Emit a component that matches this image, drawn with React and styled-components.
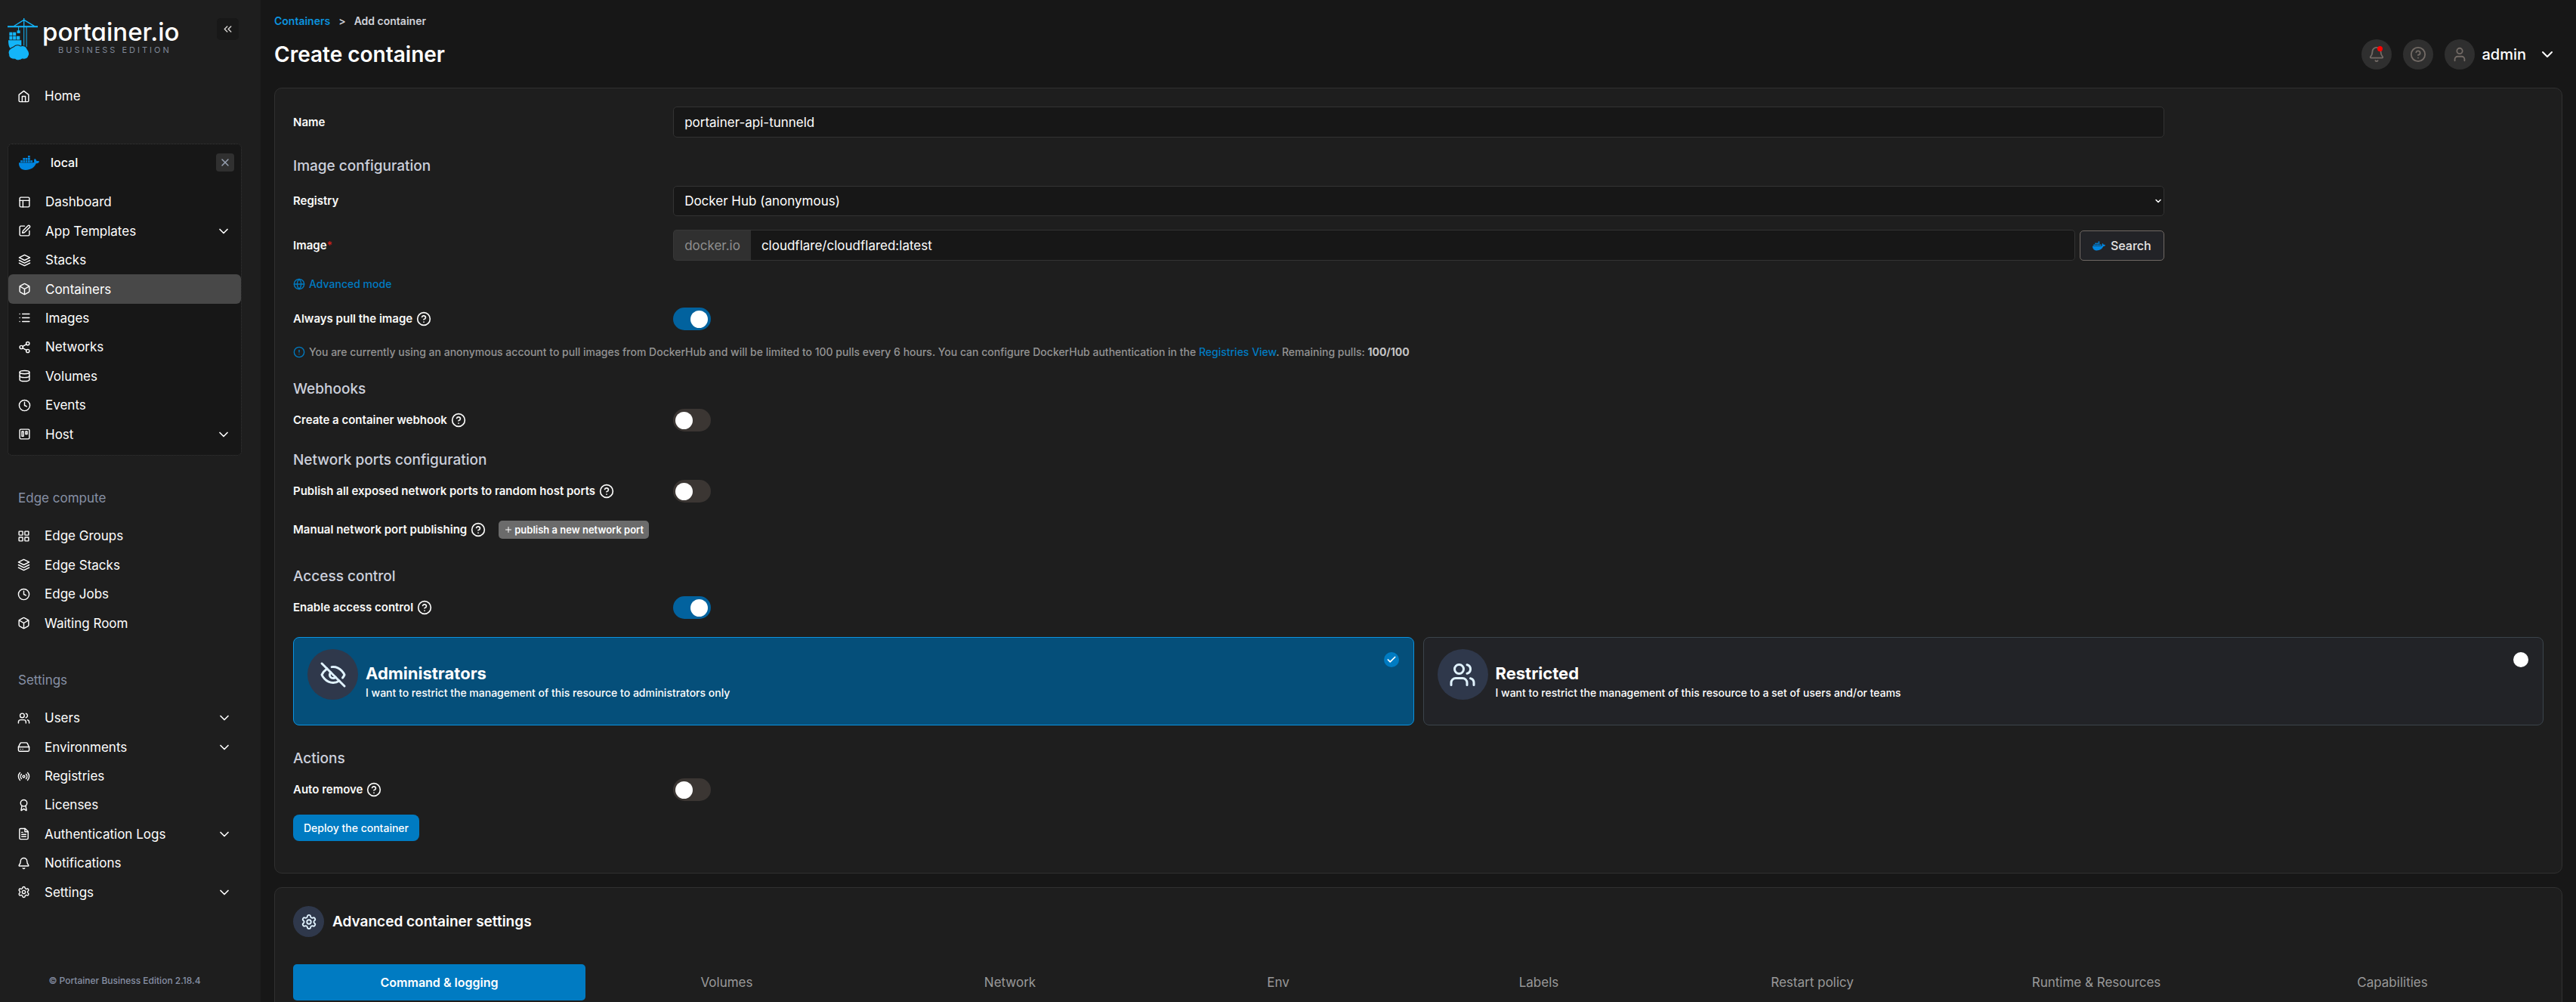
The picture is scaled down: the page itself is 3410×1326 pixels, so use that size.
import React, { useState } from 'react';
import styled, { createGlobalStyle } from 'styled-components';
import {
  PanelsTopLeft,
  SquarePen,
  Box,
  List,
  Share2,
  Database,
  Trello,
  LayoutGrid,
  HardDrive,
  Radio,
  Award,
  Bell,
  Settings,
  ChevronDown,
  ChevronsLeft,
  X,
  Globe,
  HelpCircle,
  AlertCircle,
  User,
  Plus,
  Check,
} from 'lucide-react';
import { FaDocker } from 'react-icons/fa';

const GlobalStyle = createGlobalStyle`
  *, *::before, *::after { box-sizing: border-box; }
  body {
    margin: 0;
    background: #171717;
    color: #ffffff;
    font-family: Inter, "Liberation Sans", sans-serif;
    font-size: 15px;
    line-height: 20px;
  }
  button, input, select { font-family: inherit; }
  a { text-decoration: none; }
  svg { flex: none; display: block; }
`;

/* ---------- line icons ---------- */

const LineIcon = ({ size, children }) => (
  <svg
    width={size}
    height={size}
    viewBox="0 0 24 24"
    fill="none"
    stroke="currentColor"
    strokeWidth="2"
    strokeLinecap="round"
    strokeLinejoin="round"
    aria-hidden="true"
  >
    {children}
  </svg>
);

const HomeIcon = ({ size }) => (
  <LineIcon size={size}>
    <path d="m3 9 9-7 9 7v11a2 2 0 0 1-2 2H5a2 2 0 0 1-2-2z" />
    <polyline points="9 22 9 12 15 12 15 22" />
  </LineIcon>
);

const LayersIcon = ({ size }) => (
  <LineIcon size={size}>
    <polygon points="12 2 2 7 12 12 22 7 12 2" />
    <polyline points="2 17 12 22 22 17" />
    <polyline points="2 12 12 17 22 12" />
  </LineIcon>
);

const ClockIcon = ({ size }) => (
  <LineIcon size={size}>
    <circle cx="12" cy="12" r="10" />
    <polyline points="12 6 12 12 16 14" />
  </LineIcon>
);

const FileIcon = ({ size }) => (
  <LineIcon size={size}>
    <path d="M14.5 2H6a2 2 0 0 0-2 2v16a2 2 0 0 0 2 2h12a2 2 0 0 0 2-2V7.5z" />
    <polyline points="14 2 14 8 20 8" />
    <path d="M16 13H8M16 17H8M10 9H8" />
  </LineIcon>
);

const UsersIcon = ({ size }) => (
  <LineIcon size={size}>
    <path d="M16 21v-2a4 4 0 0 0-4-4H6a4 4 0 0 0-4 4v2" />
    <circle cx="9" cy="7" r="4" />
    <path d="M22 21v-2a4 4 0 0 0-3-3.87M16 3.13a4 4 0 0 1 0 7.75" />
  </LineIcon>
);

const EyeOffIcon = ({ size }) => (
  <LineIcon size={size}>
    <path d="M9.88 9.88a3 3 0 1 0 4.24 4.24" />
    <path d="M10.73 5.08A10.43 10.43 0 0 1 12 5c7 0 10 7 10 7a13.16 13.16 0 0 1-1.67 2.68" />
    <path d="M6.61 6.61A13.526 13.526 0 0 0 2 12s3 7 10 7a9.74 9.74 0 0 0 5.39-1.61" />
    <line x1="2" y1="2" x2="22" y2="22" />
  </LineIcon>
);

const CraneLogo = () => (
  <svg width="40" height="56" viewBox="27 42 118 165" aria-hidden="true">
    <g fill="none" stroke="#13b5f9" strokeWidth="4">
      <path d="M91 42V76M52 73L91 49L132 73" />
      <path d="M91 76V155M101 76V155M70 76V92" strokeWidth="3" />
    </g>
    <g fill="#13b5f9">
      <rect x="27" y="72" width="118" height="6" />
      <rect x="64" y="90" width="12" height="11" />
      <rect x="34" y="97" width="12" height="13" />
      <rect x="48" y="97" width="12" height="13" />
      <rect x="34" y="112" width="12" height="14" />
      <rect x="48" y="112" width="12" height="14" />
      <rect x="62" y="112" width="13" height="14" />
      <path d="M30 128H81V152C70 162 44 168 36 158C31 150 30 140 30 128Z" />
      <path
        d="M52 153C59 145 72 146 77 151C89 147 101 151 104 163C112 172 113 184 108 192C104 201 94 203 85 201C77 208 62 209 56 202C42 203 30 196 32 184C25 170 38 158 52 153Z"
        stroke="#1e1e1e"
        strokeWidth="3"
      />
    </g>
  </svg>
);

/* ---------- shell ---------- */

const Shell = styled.div`
  display: flex;
  height: 100vh;
  overflow: hidden;
`;

const Sidebar = styled.aside`
  flex: none;
  width: 345px;
  display: flex;
  flex-direction: column;
  padding: 24px 25px 18px 10px;
  background: #1e1e1e;
`;

const SidebarTop = styled.div`
  display: flex;
  align-items: flex-start;
  justify-content: space-between;
  padding-right: 4px;
  margin-bottom: 28px;
`;

const Brand = styled.a`
  display: flex;
  gap: 6px;
  color: #ffffff;
`;

const BrandName = styled.span`
  display: block;
  font-size: 33px;
  line-height: 36px;
  font-weight: 500;
  font-feature-settings: "cv11";
`;

const BrandEdition = styled.span`
  display: block;
  padding-left: 21px;
  font-size: 11px;
  line-height: 12px;
  letter-spacing: 3px;
  color: #7f8798;
`;

const CollapseButton = styled.button`
  display: grid;
  place-items: center;
  width: 29px;
  height: 29px;
  padding: 0;
  border: 0;
  border-radius: 5px;
  background: #181818;
  color: #d6d3d1;
`;

const NavList = styled.ul`
  display: grid;
  grid-auto-rows: 1fr;
  min-height: ${(p) => p.$height}px;
  margin: 0;
  padding: 0;
  list-style: none;
`;

const NavLink = styled.a`
  display: flex;
  align-items: center;
  gap: 19px;
  height: 100%;
  padding: 0 13px;
  border-radius: 6px;
  font-size: 17px;
  line-height: 24px;
  color: #ffffff;
  background: ${(p) => (p.$active ? '#484848' : 'transparent')};
`;

const NavLabel = styled.span`
  flex: 1;
`;

const Environment = styled.section`
  margin-top: 44px;
  padding-bottom: 8px;
  border: 1px dotted #3a3a3a;
  border-radius: 6px;
  background: #171717;
`;

const EnvironmentHead = styled.div`
  display: flex;
  align-items: center;
  gap: 15px;
  height: 48px;
  margin-bottom: 9px;
  padding: 0 9px 0 14px;
  font-size: 16px;
  font-weight: 500;
`;

const EnvironmentName = styled.span`
  flex: 1;
`;

const CloseButton = styled.button`
  display: grid;
  place-items: center;
  width: 24px;
  height: 24px;
  padding: 0;
  border: 0;
  border-radius: 4px;
  background: #303030;
  color: #98a2b3;
`;

const NavHeading = styled.h2`
  margin: 44px 0 19px;
  padding-left: 14px;
  font-size: 17px;
  line-height: 24px;
  font-weight: 400;
  color: #8790a5;
`;

const SidebarFooter = styled.footer`
  margin-top: auto;
  text-align: center;
  font-size: 12px;
  font-weight: 500;
  color: #8790a5;
`;

/* ---------- page header ---------- */

const Main = styled.main`
  flex: 1;
  min-width: 0;
  padding: 18px;
`;

const Breadcrumb = styled.nav`
  display: flex;
  gap: 11px;
  margin-bottom: 14px;
  font-size: 14px;
  font-weight: 600;
  color: #d0d2da;
`;

const CrumbLink = styled.a`
  color: #0b93df;
`;

const TitleRow = styled.header`
  display: flex;
  align-items: center;
  justify-content: space-between;
  height: 40px;
  margin-bottom: 24px;
`;

const Title = styled.h1`
  margin: 0;
  font-size: 28px;
  line-height: 36px;
  font-weight: 600;
`;

const HeaderTools = styled.div`
  display: flex;
  align-items: center;
  gap: 15px;
  padding-right: 8px;
`;

const RoundButton = styled.button`
  position: relative;
  display: grid;
  place-items: center;
  width: 40px;
  height: 40px;
  padding: 0;
  border: 0;
  border-radius: 50%;
  background: #2f2f2f;
  color: #736b66;
`;

const AlertDot = styled.span`
  position: absolute;
  top: 9px;
  right: 12px;
  width: 7px;
  height: 7px;
  border-radius: 50%;
  background: #ff0000;
`;

const UserMenu = styled.button`
  display: flex;
  align-items: center;
  gap: 9px;
  padding: 0;
  border: 0;
  background: none;
  color: #ffffff;
  font-size: 20px;
  line-height: 24px;
  font-weight: 500;
`;

const Avatar = styled.span`
  display: grid;
  place-items: center;
  width: 40px;
  height: 40px;
  border-radius: 50%;
  background: #2f2f2f;
  color: #736b66;
`;

const UserName = styled.span`
  padding-right: 7px;
`;

/* ---------- form card ---------- */

const Card = styled.section`
  margin-bottom: 18px;
  padding: 24px 24px 42px;
  border: 1px solid #303030;
  border-radius: 10px;
  background: #1e1e1e;
`;

const Section = styled.section`
  margin-top: ${(p) => (p.$wide ? 32 : 26)}px;
`;

const SectionTitle = styled.h2`
  margin: 0 0 14px;
  font-size: 19px;
  line-height: 24px;
  font-weight: 500;
  color: #ccd0dc;
`;

const Fields = styled.div`
  display: flex;
  flex-direction: column;
  gap: 18px;
`;

const FieldRow = styled.div`
  display: grid;
  grid-template-columns: calc((100% + 40px) / 6) calc((100% + 40px) * 2 / 3 - 39px);
  align-items: center;
`;

const Label = styled.label`
  display: flex;
  align-items: center;
  gap: 5px;
  font-size: 15px;
  font-weight: 600;
  color: #fafaf9;
  white-space: nowrap;
`;

const Required = styled.sup`
  margin-left: -5px;
  font-size: 14px;
  line-height: 14px;
  color: #c8201a;
`;

const TextInput = styled.input`
  width: 100%;
  min-width: 0;
  height: 41px;
  padding: 0 14px;
  border: 1px solid #333333;
  border-radius: 5px;
  background: #171717;
  color: #ffffff;
  font-size: 17px;
`;

const SelectBox = styled.div`
  display: grid;
  align-items: center;

  > * { grid-area: 1 / 1; }

  svg {
    justify-self: end;
    margin-right: 2px;
    pointer-events: none;
  }
`;

const Select = styled.select`
  appearance: none;
  width: 100%;
  height: 40px;
  padding: 0 14px;
  border: 1px solid #333333;
  border-radius: 5px;
  background: #171717;
  color: #ffffff;
  font-size: 17px;
`;

const ImageControls = styled.div`
  display: flex;
  align-items: flex-end;
  gap: 6px;
`;

const InputGroup = styled.div`
  flex: 1;
  display: flex;

  input {
    border-left: 0;
    border-radius: 0 5px 5px 0;
  }
`;

const Addon = styled.span`
  display: flex;
  align-items: center;
  padding: 0 14px;
  border: 1px solid #383838;
  border-right: 0;
  border-radius: 5px 0 0 5px;
  background: #303030;
  color: #8f8f8f;
  font-size: 17px;
`;

const SearchButton = styled.button`
  display: flex;
  align-items: center;
  justify-content: center;
  gap: 7px;
  width: 112px;
  height: 40px;
  padding: 0;
  border: 1px solid #6f6863;
  border-radius: 5px;
  background: #222327;
  color: #e7e5e4;
  font-size: 16px;
  font-weight: 500;
`;

const ModeLink = styled.a`
  display: flex;
  align-items: center;
  align-self: flex-start;
  gap: 5px;
  font-size: 14px;
  line-height: 26px;
  font-weight: 500;
  color: #007bc2;
`;

const Switch = styled.input.attrs({ type: 'checkbox', role: 'switch' })`
  appearance: none;
  display: flex;
  align-items: center;
  width: 50px;
  height: 30px;
  margin: 0;
  padding: 0 4px 0 3px;
  border-radius: 15px;
  background: #3b3633;

  &::before {
    content: "";
    width: 23px;
    height: 23px;
    border-radius: 50%;
    background: #ffffff;
  }

  &:checked {
    justify-content: flex-end;
    background: #02629e;
  }
`;

const Hint = styled.p`
  display: flex;
  align-items: center;
  gap: 5px;
  margin: 0;
  font-size: 14px;
  line-height: 22px;
  font-weight: 500;
  color: #949494;

  > svg { color: #007bc2; }
  a { color: #007bc2; }
  strong { color: #c4c4c4; font-weight: 700; }
`;

const PortRow = styled.div`
  display: flex;
  align-items: center;
  gap: 17px;
  min-height: 36px;
`;

const PublishButton = styled.button`
  display: flex;
  align-items: center;
  gap: 2px;
  height: 24px;
  padding: 0 7px;
  border: 0;
  border-radius: 5px;
  background: #6b6b6b;
  color: #ffffff;
  font-size: 13px;
  font-weight: 600;
`;

const OptionGrid = styled.div`
  display: grid;
  grid-template-columns: 1fr 1fr;
  gap: 12px;
  margin-top: 6px;
`;

const OptionCard = styled.label`
  display: flex;
  align-items: flex-start;
  gap: 10px;
  padding: 15px 19px 30px 18px;
  border: 1px solid ${(p) => (p.$selected ? '#0b93df' : '#3b444b')};
  border-radius: 8px;
  background: ${(p) => (p.$selected ? '#054f7a' : '#222327')};
`;

const Badge = styled.span`
  display: grid;
  place-items: center;
  width: ${(p) => p.$size}px;
  height: ${(p) => p.$size}px;
  border-radius: 50%;
  background: #2f384b;
  color: #e0f2fe;
`;

const OptionText = styled.span`
  flex: 1;
  padding-top: 18px;
`;

const OptionTitle = styled.span`
  display: block;
  font-size: 22px;
  line-height: 28px;
  font-weight: 700;
`;

const OptionNote = styled.span`
  display: block;
  font-size: 14px;
  line-height: 24px;
  font-weight: 500;
`;

const RadioMark = styled.span`
  display: grid;
  place-items: center;
  margin-top: 4px;

  > * { grid-area: 1 / 1; }
`;

const RadioInput = styled.input.attrs({ type: 'radio' })`
  appearance: none;
  width: 20px;
  height: 20px;
  margin: 0;
  border-radius: 50%;
  background: #ffffff;

  &:checked { background: #007bc2; }
`;

const DeployButton = styled.button`
  align-self: flex-start;
  height: 35px;
  padding: 0 14px;
  border: 0;
  border-radius: 8px;
  background: #007bc2;
  color: #ffffff;
  font-size: 14px;
  font-weight: 500;
`;

/* ---------- advanced settings ---------- */

const CardHead = styled.header`
  display: flex;
  align-items: center;
  gap: 11px;
  margin-bottom: 36px;
`;

const CardTitle = styled.h2`
  margin: 0;
  font-size: 19px;
  line-height: 24px;
  font-weight: 600;
`;

const TabBar = styled.div`
  display: grid;
  grid-template-columns: 387fr 374fr 376fr 334fr 356fr 368fr 384fr 400fr;
`;

const Tab = styled.button`
  height: 48px;
  padding: 0;
  border: 0;
  border-radius: 5px;
  background: ${(p) => (p.$active ? '#007bc2' : 'transparent')};
  color: ${(p) => (p.$active ? '#ffffff' : '#999999')};
  font-size: ${(p) => (p.$active ? 16 : 17)}px;
  font-weight: ${(p) => (p.$active ? 600 : 400)};
`;

const environmentItems = [
  ['Dashboard', PanelsTopLeft],
  ['App Templates', SquarePen, true],
  ['Stacks', LayersIcon],
  ['Containers', Box],
  ['Images', List],
  ['Networks', Share2],
  ['Volumes', Database],
  ['Events', ClockIcon],
  ['Host', Trello, true],
];

const edgeItems = [
  ['Edge Groups', LayoutGrid],
  ['Edge Stacks', LayersIcon],
  ['Edge Jobs', ClockIcon],
  ['Waiting Room', Box],
];

const settingsItems = [
  ['Users', UsersIcon, true],
  ['Environments', HardDrive, true],
  ['Registries', Radio],
  ['Licenses', Award],
  ['Authentication Logs', FileIcon, true],
  ['Notifications', Bell],
  ['Settings', Settings, true],
];

const tabs = [
  'Command & logging',
  'Volumes',
  'Network',
  'Env',
  'Labels',
  'Restart policy',
  'Runtime & Resources',
  'Capabilities',
];

const Nav = ({ items, height, active }) => (
  <NavList $height={height}>
    {items.map(([name, Icon, expandable]) => (
      <li key={name}>
        <NavLink href="#" $active={name === active}>
          <Icon size={17} />
          <NavLabel>{name}</NavLabel>
          {expandable && <ChevronDown size={20} />}
        </NavLink>
      </li>
    ))}
  </NavList>
);

const SwitchRow = ({ id, label, on }) => (
  <FieldRow>
    <Label htmlFor={id}>
      {label}
      <HelpCircle size={20} />
    </Label>
    <Switch id={id} defaultChecked={on} />
  </FieldRow>
);

const Option = ({ value, selected, onSelect, icon: Icon, title, note }) => (
  <OptionCard $selected={selected}>
    <Badge $size={67}>
      <Icon size={36} />
    </Badge>
    <OptionText>
      <OptionTitle>{title}</OptionTitle>
      <OptionNote>{note}</OptionNote>
    </OptionText>
    <RadioMark>
      <RadioInput name="access" value={value} checked={selected} onChange={() => onSelect(value)} />
      {selected && <Check size={14} strokeWidth={3} />}
    </RadioMark>
  </OptionCard>
);

export default function App() {
  const [access, setAccess] = useState('admins');
  const [tab, setTab] = useState(tabs[0]);

  return (
    <Shell>
      <GlobalStyle />
      <Sidebar>
        <SidebarTop>
          <Brand href="#">
            <CraneLogo />
            <span>
              <BrandName>portainer.io</BrandName>
              <BrandEdition>BUSINESS EDITION</BrandEdition>
            </span>
          </Brand>
          <CollapseButton aria-label="Collapse sidebar">
            <ChevronsLeft size={17} />
          </CollapseButton>
        </SidebarTop>

        <Nav items={[['Home', HomeIcon]]} height={38} />

        <Environment>
          <EnvironmentHead>
            <FaDocker size={27} color="#0086e0" />
            <EnvironmentName>local</EnvironmentName>
            <CloseButton aria-label="Disconnect">
              <X size={16} strokeWidth={2} />
            </CloseButton>
          </EnvironmentHead>
          <Nav items={environmentItems} height={346} active="Containers" />
        </Environment>

        <NavHeading>Edge compute</NavHeading>
        <Nav items={edgeItems} height={154} />

        <NavHeading>Settings</NavHeading>
        <Nav items={settingsItems} height={269} />

        <SidebarFooter>© Portainer Business Edition 2.18.4</SidebarFooter>
      </Sidebar>

      <Main>
        <Breadcrumb>
          <CrumbLink href="#">Containers</CrumbLink>
          <span>&gt;</span>
          <span>Add container</span>
        </Breadcrumb>
        <TitleRow>
          <Title>Create container</Title>
          <HeaderTools>
            <RoundButton aria-label="Notifications">
              <Bell size={22} />
              <AlertDot />
            </RoundButton>
            <RoundButton aria-label="Help">
              <HelpCircle size={22} />
            </RoundButton>
            <UserMenu>
              <Avatar>
                <User size={22} />
              </Avatar>
              <UserName>admin</UserName>
              <ChevronDown size={24} />
            </UserMenu>
          </HeaderTools>
        </TitleRow>

        <Card>
          <FieldRow>
            <Label htmlFor="name">Name</Label>
            <TextInput id="name" defaultValue="portainer-api-tunneld" />
          </FieldRow>

          <Section>
            <SectionTitle>Image configuration</SectionTitle>
            <Fields>
              <FieldRow>
                <Label htmlFor="registry">Registry</Label>
                <SelectBox>
                  <Select id="registry">
                    <option>Docker Hub (anonymous)</option>
                  </Select>
                  <ChevronDown size={12} strokeWidth={3} />
                </SelectBox>
              </FieldRow>
              <FieldRow>
                <Label htmlFor="image">
                  Image<Required>*</Required>
                </Label>
                <ImageControls>
                  <InputGroup>
                    <Addon>docker.io</Addon>
                    <TextInput id="image" defaultValue="cloudflare/cloudflared:latest" />
                  </InputGroup>
                  <SearchButton>
                    <FaDocker size={17} color="#0086e0" />
                    Search
                  </SearchButton>
                </ImageControls>
              </FieldRow>
              <ModeLink href="#">
                <Globe size={16} />
                Advanced mode
              </ModeLink>
              <SwitchRow id="pull" label="Always pull the image" on />
              <Hint>
                <AlertCircle size={16} />
                <span>
                  You are currently using an anonymous account to pull images from DockerHub and will be
                  limited to 100 pulls every 6 hours. You can configure DockerHub authentication in the{' '}
                  <a href="#">Registries View</a>. Remaining pulls: <strong>100/100</strong>
                </span>
              </Hint>
            </Fields>
          </Section>

          <Section>
            <SectionTitle>Webhooks</SectionTitle>
            <SwitchRow id="webhook" label="Create a container webhook" />
          </Section>

          <Section>
            <SectionTitle>Network ports configuration</SectionTitle>
            <Fields>
              <SwitchRow id="publish" label="Publish all exposed network ports to random host ports" />
              <PortRow>
                <Label as="span">
                  Manual network port publishing
                  <HelpCircle size={20} />
                </Label>
                <PublishButton>
                  <Plus size={12} strokeWidth={2} />
                  publish a new network port
                </PublishButton>
              </PortRow>
            </Fields>
          </Section>

          <Section $wide>
            <SectionTitle>Access control</SectionTitle>
            <Fields>
              <SwitchRow id="access-control" label="Enable access control" on />
              <OptionGrid>
                <Option
                  value="admins"
                  selected={access === 'admins'}
                  onSelect={setAccess}
                  icon={EyeOffIcon}
                  title="Administrators"
                  note="I want to restrict the management of this resource to administrators only"
                />
                <Option
                  value="restricted"
                  selected={access === 'restricted'}
                  onSelect={setAccess}
                  icon={UsersIcon}
                  title="Restricted"
                  note="I want to restrict the management of this resource to a set of users and/or teams"
                />
              </OptionGrid>
            </Fields>
          </Section>

          <Section $wide>
            <SectionTitle>Actions</SectionTitle>
            <Fields>
              <SwitchRow id="auto-remove" label="Auto remove" />
              <DeployButton>Deploy the container</DeployButton>
            </Fields>
          </Section>
        </Card>

        <Card>
          <CardHead>
            <Badge $size={41}>
              <Settings size={22} />
            </Badge>
            <CardTitle>Advanced container settings</CardTitle>
          </CardHead>
          <TabBar role="tablist">
            {tabs.map((name) => (
              <Tab key={name} role="tab" aria-selected={name === tab} $active={name === tab} onClick={() => setTab(name)}>
                {name}
              </Tab>
            ))}
          </TabBar>
        </Card>
      </Main>
    </Shell>
  );
}
